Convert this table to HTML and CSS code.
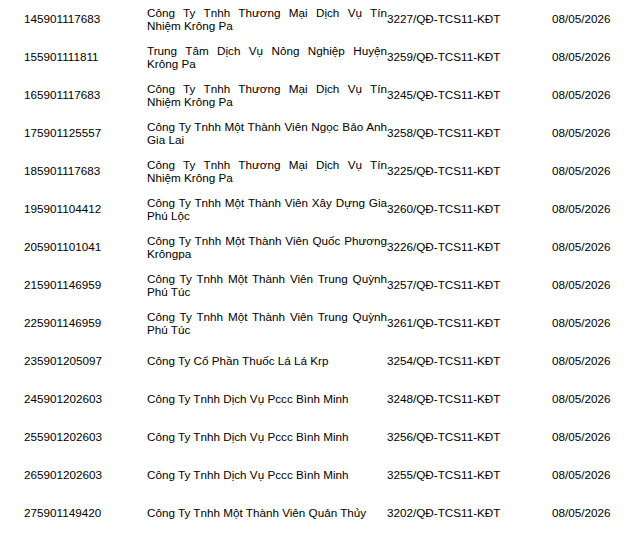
FILE: index.html
```html
<!DOCTYPE html>
<html lang="vi">
<head>
<meta charset="utf-8">
<link rel="stylesheet" href="styles.css">
</head>
<body>
<div class="list">
  <div class="row"><div class="num">145901117683</div><div class="name"><span class="l1">Công Ty Tnhh Thương Mại Dịch Vụ Tín</span><span>Nhiệm Krông Pa</span></div><div class="code">3227/QĐ-TCS11-KĐT</div><div class="date">08/05/2026</div></div>
  <div class="row"><div class="num">155901111811</div><div class="name"><span class="l1">Trung Tâm Dịch Vụ Nông Nghiệp Huyện</span><span>Krông Pa</span></div><div class="code">3259/QĐ-TCS11-KĐT</div><div class="date">08/05/2026</div></div>
  <div class="row"><div class="num">165901117683</div><div class="name"><span class="l1">Công Ty Tnhh Thương Mại Dịch Vụ Tín</span><span>Nhiệm Krông Pa</span></div><div class="code">3245/QĐ-TCS11-KĐT</div><div class="date">08/05/2026</div></div>
  <div class="row"><div class="num">175901125557</div><div class="name"><span class="l1">Công Ty Tnhh Một Thành Viên Ngọc Bảo Anh</span><span>Gia Lai</span></div><div class="code">3258/QĐ-TCS11-KĐT</div><div class="date">08/05/2026</div></div>
  <div class="row"><div class="num">185901117683</div><div class="name"><span class="l1">Công Ty Tnhh Thương Mại Dịch Vụ Tín</span><span>Nhiệm Krông Pa</span></div><div class="code">3225/QĐ-TCS11-KĐT</div><div class="date">08/05/2026</div></div>
  <div class="row"><div class="num">195901104412</div><div class="name"><span class="l1">Công Ty Tnhh Một Thành Viên Xây Dựng Gia</span><span>Phú Lộc</span></div><div class="code">3260/QĐ-TCS11-KĐT</div><div class="date">08/05/2026</div></div>
  <div class="row"><div class="num">205901101041</div><div class="name"><span class="l1">Công Ty Tnhh Một Thành Viên Quốc Phương</span><span>Krôngpa</span></div><div class="code">3226/QĐ-TCS11-KĐT</div><div class="date">08/05/2026</div></div>
  <div class="row"><div class="num">215901146959</div><div class="name"><span class="l1">Công Ty Tnhh Một Thành Viên Trung Quỳnh</span><span>Phú Túc</span></div><div class="code">3257/QĐ-TCS11-KĐT</div><div class="date">08/05/2026</div></div>
  <div class="row"><div class="num">225901146959</div><div class="name"><span class="l1">Công Ty Tnhh Một Thành Viên Trung Quỳnh</span><span>Phú Túc</span></div><div class="code">3261/QĐ-TCS11-KĐT</div><div class="date">08/05/2026</div></div>
  <div class="row"><div class="num">235901205097</div><div class="name"><span>Công Ty Cổ Phần Thuốc Lá Lá Krp</span></div><div class="code">3254/QĐ-TCS11-KĐT</div><div class="date">08/05/2026</div></div>
  <div class="row"><div class="num">245901202603</div><div class="name"><span>Công Ty Tnhh Dịch Vụ Pccc Bình Minh</span></div><div class="code">3248/QĐ-TCS11-KĐT</div><div class="date">08/05/2026</div></div>
  <div class="row"><div class="num">255901202603</div><div class="name"><span>Công Ty Tnhh Dịch Vụ Pccc Bình Minh</span></div><div class="code">3256/QĐ-TCS11-KĐT</div><div class="date">08/05/2026</div></div>
  <div class="row"><div class="num">265901202603</div><div class="name"><span>Công Ty Tnhh Dịch Vụ Pccc Bình Minh</span></div><div class="code">3255/QĐ-TCS11-KĐT</div><div class="date">08/05/2026</div></div>
  <div class="row"><div class="num">275901149420</div><div class="name"><span>Công Ty Tnhh Một Thành Viên Quản Thủy</span></div><div class="code">3202/QĐ-TCS11-KĐT</div><div class="date">08/05/2026</div></div>
</div>
</body>
</html>
```

FILE: styles.css
```css
html, body {
  margin: 0;
  padding: 0;
  background: #fff;
}

body {
  font-family: "Liberation Sans", Arial, sans-serif;
  font-size: 11.7px;
  color: #000;
}

.list {
  display: flex;
  flex-direction: column;
}

.row {
  display: grid;
  grid-template-columns: 123px 240px 165px 1fr;
  align-items: center;
  height: 38px;
  padding-left: 24px;
  line-height: 13.4px;
}

.name {
  display: flex;
  flex-direction: column;
}

.name .l1 {
  text-align: justify;
  text-align-last: justify;
}

.code, .date, .num {
  white-space: nowrap;
}
```
